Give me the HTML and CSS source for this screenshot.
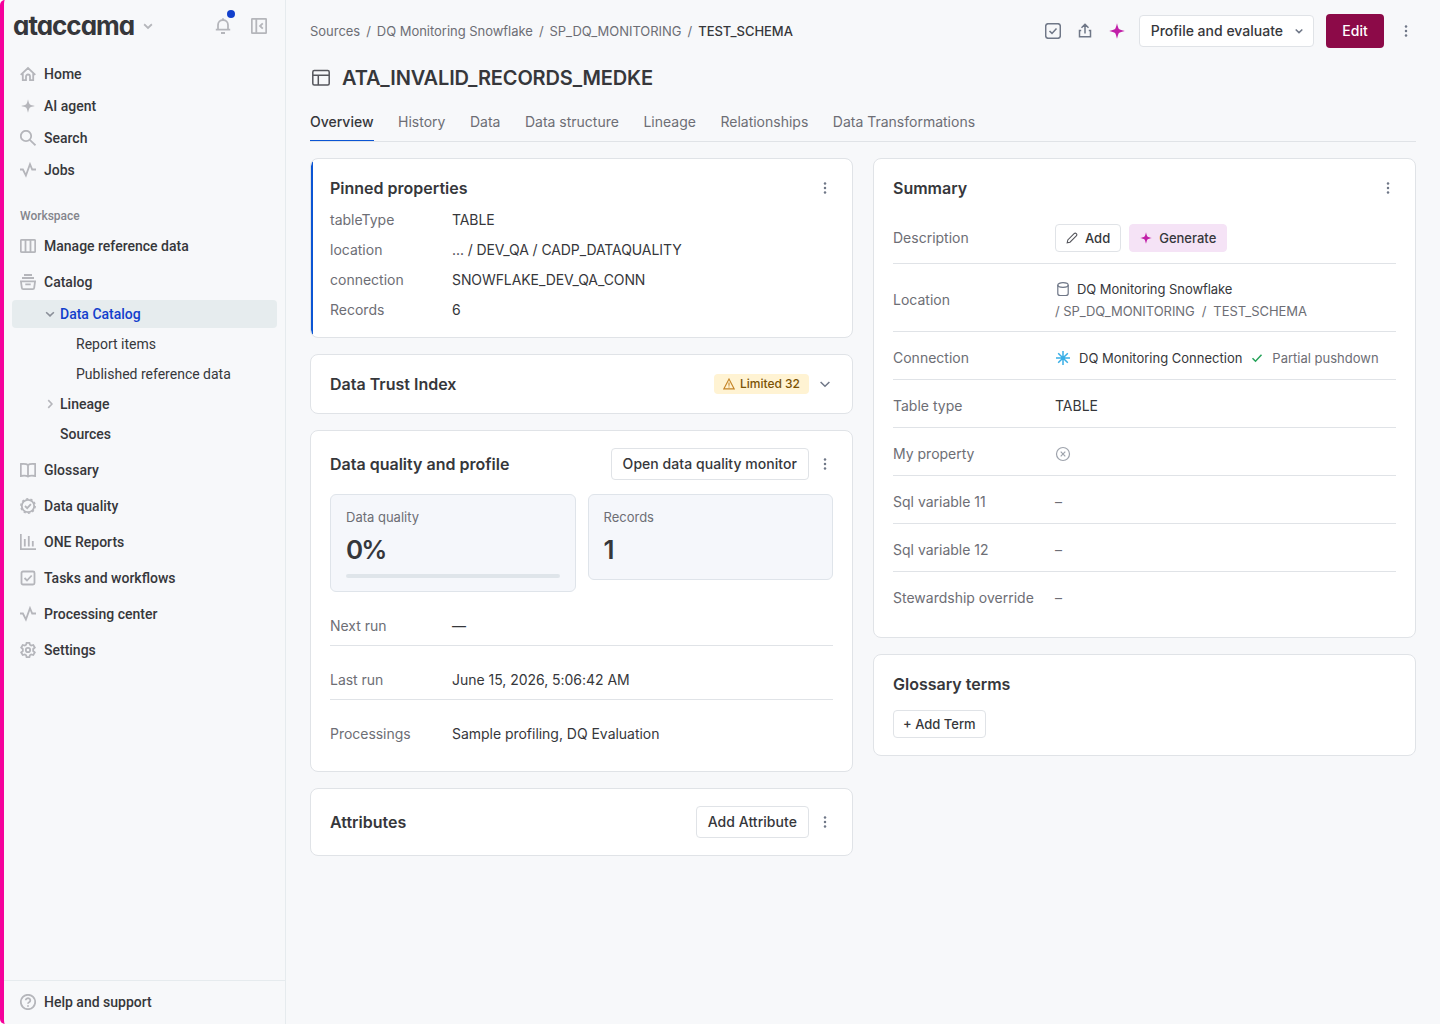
FILE: index.html
```html
<!DOCTYPE html>
<html lang="en">
<head>
    <meta charset="UTF-8">
    <meta name="viewport" content="width=device-width, initial-scale=1.0">
    <title>ATA_INVALID_RECORDS_MEDKE</title>
    <link rel="stylesheet" href="styles.css">
</head>
<body>
    <!-- shared icons -->
    <svg class="sprite">
        <symbol id="kebab" viewBox="0 0 16 16"><g fill="currentColor"><circle cx="8" cy="3.4" r="1.25"/><circle cx="8" cy="8" r="1.25"/><circle cx="8" cy="12.6" r="1.25"/></g></symbol>
        <symbol id="chevron" viewBox="0 0 16 16"><path d="M3.6 6l4.4 4.2L12.4 6"/></symbol>
        <symbol id="star" viewBox="0 0 16 16"><path fill="currentColor" stroke="none" d="M8 .2C8.600 2.700 9.300 5.400 10 6c.7.7 3.400 1.400 5.800 2-2.400.6-5.100 1.300-5.800 2-.7.6-1.400 3.300-2 5.800-.6-2.500-1.300-5.200-2-5.800-.7-.7-3.400-1.400-5.800-2 2.400-.6 5.100-1.300 5.800-2 .7-.6 1.400-3.300 2-5.800z"/></symbol>
        <symbol id="pulse" viewBox="0 0 16 16"><path d="M0 7.500h2.900l3 6L10 2.200l2.200 5.300H16"/></symbol>
        <symbol id="check-box" viewBox="0 0 16 16"><rect x="1.500" y="1.500" width="13" height="13" rx="1.500"/><path d="M4.500 8l2.500 2.500 4.700-5"/></symbol>
    </svg>

    <div class="app">
        <aside class="sidebar">
            <div class="brand">
                <span class="logo">ataccama</span>
                <svg class="icon brand-arrow"><use href="#chevron"/></svg>
                <span class="bell">
                    <svg class="icon" viewBox="0 0 16 16"><path d="M3 11.700V7a5 5 0 0 1 10 0v4.700M.8 11.700h14.400M8 2V.2M6 15h4"/></svg>
                    <i class="dot"></i>
                </span>
                <svg class="icon collapse" viewBox="0 0 16 16"><rect x=".8" y=".8" width="14.400" height="14.400" rx="1"/><path d="M5.300 1v14M11.800 5.300L9 8l2.800 2.700"/></svg>
            </div>

            <nav class="nav-top">
                <a class="nav-item"><svg class="icon" viewBox="0 0 16 16"><path d="M.7 8.800L8 2l7.300 6.800M2.800 7.500v6.700H6V10.500a2 2 0 0 1 4 0v3.700h3.200V7.500"/></svg>Home</a>
                <a class="nav-item"><svg class="icon star-small"><use href="#star"/></svg>AI agent</a>
                <a class="nav-item"><svg class="icon" viewBox="0 0 16 16"><circle cx="6" cy="6" r="5.200"/><path d="M9.800 9.800l5.700 5.500"/></svg>Search</a>
                <a class="nav-item"><svg class="icon"><use href="#pulse"/></svg>Jobs</a>
            </nav>

            <div class="nav-label">Workspace</div>
            <nav class="nav-main">
                <a class="nav-item"><svg class="icon" viewBox="0 0 16 16"><rect x=".8" y="1.800" width="14.400" height="12.400" rx=".8"/><path d="M5.500 2v12M10.500 2v12"/></svg>Manage reference data</a>
                <div class="nav-group">
                    <a class="nav-item"><svg class="icon" viewBox="0 0 16 16"><path d="M4 1h8M2 4h12M.9 7.300h14.200l-.9 6.400a1.500 1.500 0 0 1-1.500 1.400H3.300a1.500 1.500 0 0 1-1.500-1.400zM5.300 10.400h5.400"/></svg>Catalog</a>
                    <div class="sub-nav">
                        <a class="sub-item active"><svg class="icon"><use href="#chevron"/></svg>Data Catalog</a>
                        <a class="sub-item leaf">Report items</a>
                        <a class="sub-item leaf">Published reference data</a>
                        <a class="sub-item closed"><svg class="icon"><use href="#chevron"/></svg>Lineage</a>
                        <a class="sub-item plain">Sources</a>
                    </div>
                </div>
                <a class="nav-item"><svg class="icon" viewBox="0 0 16 16"><path d="M8 3v10.500M8 3C6.500 1.700 3.500 1.700.8 2v12c2.700-.4 5.700-.4 7.200.6 1.500-1 4.500-1 7.200-.6V2C12.500 1.700 9.500 1.700 8 3z"/></svg>Glossary</a>
                <a class="nav-item"><svg class="icon" viewBox="0 0 16 16"><circle cx="8" cy="8" r="6.200"/><circle cx="8" cy="8" r="7.200" stroke-width="1.400" stroke-dasharray="2.300 2.224"/><path d="M5 8l2.200 2.200 3.700-4"/></svg>Data quality</a>
                <a class="nav-item"><svg class="icon" viewBox="0 0 16 16"><path d="M.8 0v15.200H16M4.800 5v7.500M8.800 2v10.500M12.800 7v5.500"/></svg>ONE Reports</a>
                <a class="nav-item"><svg class="icon"><use href="#check-box"/></svg>Tasks and workflows</a>
                <a class="nav-item"><svg class="icon"><use href="#pulse"/></svg>Processing center</a>
                <a class="nav-item"><svg class="icon" viewBox="0 0 16 16"><path d="M6.600 .8h2.800l.5 2 1.300.8 2.100-.6 1.500 2.500-1.600 1.500v2l1.600 1.500-1.500 2.500-2.100-.6-1.300.8-.5 2H6.600l-.5-2-1.300-.8-2.100.6-1.500-2.500L2.800 9V7L1.200 5.500 2.700 3l2.100.6 1.300-.8z"/><circle cx="8" cy="8" r="2.200"/></svg>Settings</a>
            </nav>

            <div class="help">
                <a class="nav-item"><svg class="icon" viewBox="0 0 16 16"><circle cx="8" cy="8" r="7.200"/><path d="M5.700 6.300a2.300 2.100 0 1 1 3.400 1.900c-.8.4-1.100.7-1.100 1.500M8 11.200v1.600"/></svg>Help and support</a>
            </div>
        </aside>

        <main class="main">
            <header class="topbar">
                <div class="breadcrumbs">
                    <a>Sources</a><i>/</i><a>DQ Monitoring Snowflake</a><i>/</i><a>SP_DQ_MONITORING</a><i>/</i><b>TEST_SCHEMA</b>
                </div>
                <div class="actions">
                    <svg class="icon" viewBox="0 0 16 16"><rect x=".7" y=".7" width="14.600" height="14.600" rx="2.500"/><path d="M4.500 8l2.500 2.400 4.500-5"/></svg>
                    <svg class="icon" viewBox="0 0 16 16"><path d="M8 10.500V1.500M4.500 4.700L8 1.200l3.500 3.500M4.200 7.500H2.500v6.300h11V7.500h-1.700"/></svg>
                    <svg class="icon magenta"><use href="#star"/></svg>
                    <button class="btn profile">Profile and evaluate<svg class="icon"><use href="#chevron"/></svg></button>
                    <button class="btn primary">Edit</button>
                    <svg class="icon more"><use href="#kebab"/></svg>
                </div>
            </header>

            <div class="title">
                <svg class="icon" viewBox="0 0 18 18"><rect x=".8" y="1.500" width="16.400" height="14.600" rx="1.500"/><path d="M1 6.300h16M6.300 6.300V16"/></svg>
                <h1>ATA_INVALID_RECORDS_MEDKE</h1>
            </div>

            <nav class="tabs">
                <a class="active">Overview</a>
                <a>History</a>
                <a>Data</a>
                <a>Data structure</a>
                <a>Lineage</a>
                <a>Relationships</a>
                <a>Data Transformations</a>
            </nav>

            <div class="columns">
                <div class="column">
                    <section class="card pinned">
                        <div class="card-header"><h2>Pinned properties</h2><svg class="icon"><use href="#kebab"/></svg></div>
                        <dl class="props">
                            <dt>tableType</dt><dd>TABLE</dd>
                            <dt>location</dt><dd>... / DEV_QA / CADP_DATAQUALITY</dd>
                            <dt>connection</dt><dd>SNOWFLAKE_DEV_QA_CONN</dd>
                            <dt>Records</dt><dd>6</dd>
                        </dl>
                    </section>

                    <section class="card">
                        <div class="card-header">
                            <h2>Data Trust Index</h2>
                            <span class="badge"><svg class="icon" viewBox="0 0 12 12"><path d="M6 1L.8 10.900h10.400zM6 4.500v3.300M6 8.500v1.100"/></svg>Limited 32</span>
                            <svg class="icon"><use href="#chevron"/></svg>
                        </div>
                    </section>

                    <section class="card">
                        <div class="card-header">
                            <h2>Data quality and profile</h2>
                            <button class="btn">Open data quality monitor</button>
                            <svg class="icon"><use href="#kebab"/></svg>
                        </div>
                        <div class="tiles">
                            <div class="tile">
                                <span>Data quality</span>
                                <strong>0%</strong>
                                <div class="progress"></div>
                            </div>
                            <div class="tile">
                                <span>Records</span>
                                <strong>1</strong>
                            </div>
                        </div>
                        <div class="run-row"><label>Next run</label><span>—</span></div>
                        <div class="run-row"><label>Last run</label><span>June 15, 2026, 5:06:42 AM</span></div>
                        <div class="run-row"><label>Processings</label><span>Sample profiling, DQ Evaluation</span></div>
                    </section>

                    <section class="card">
                        <div class="card-header">
                            <h2>Attributes</h2>
                            <button class="btn">Add Attribute</button>
                            <svg class="icon"><use href="#kebab"/></svg>
                        </div>
                    </section>
                </div>

                <div class="column">
                    <section class="card">
                        <div class="card-header"><h2>Summary</h2><svg class="icon"><use href="#kebab"/></svg></div>
                        <div class="sum-row description">
                            <label>Description</label>
                            <div class="value">
                                <button class="btn small add"><svg class="icon" viewBox="0 0 12 12"><path d="M1.200 10.800l.6-2.900 6.300-6.300a1.450 1.450 0 0 1 2.200 2.200L4 10.200z"/></svg>Add</button>
                                <button class="btn small generate"><svg class="icon magenta"><use href="#star"/></svg>Generate</button>
                            </div>
                        </div>
                        <div class="sum-row location">
                            <label>Location</label>
                            <div class="value">
                                <div class="source"><svg class="icon" viewBox="0 0 16 16"><ellipse cx="8" cy="4" rx="5.200" ry="2.300"/><path d="M2.800 4v8.500c0 1.200 1 2 2.500 2h5.400c1.500 0 2.500-.8 2.500-2V4"/></svg>DQ Monitoring Snowflake</div>
                                <div class="path">/ SP_DQ_MONITORING<i>/</i>TEST_SCHEMA</div>
                            </div>
                        </div>
                        <div class="sum-row connection">
                            <label>Connection</label>
                            <div class="value">
                                <svg class="icon flake" viewBox="0 0 16 16"><path d="M8 1v14M1 8h14M3.200 3.200l9.600 9.600M12.800 3.200l-9.600 9.600"/></svg>
                                <span>DQ Monitoring Connection</span>
                                <svg class="icon tick" viewBox="0 0 12 12"><path d="M1.500 6.200l3 3 6-6.400"/></svg>
                                <em>Partial pushdown</em>
                            </div>
                        </div>
                        <div class="sum-row"><label>Table type</label><div class="value">TABLE</div></div>
                        <div class="sum-row"><label>My property</label><div class="value"><svg class="icon cross" viewBox="0 0 16 16"><circle cx="8" cy="8" r="6.500"/><path d="M5.700 5.700l4.600 4.600M10.300 5.700l-4.600 4.600"/></svg></div></div>
                        <div class="sum-row"><label>Sql variable 11</label><div class="value empty">–</div></div>
                        <div class="sum-row"><label>Sql variable 12</label><div class="value empty">–</div></div>
                        <div class="sum-row"><label>Stewardship override</label><div class="value empty">–</div></div>
                    </section>

                    <section class="card">
                        <div class="card-header"><h2>Glossary terms</h2></div>
                        <button class="btn small term">+ Add Term</button>
                    </section>
                </div>
            </div>
        </main>
    </div>
</body>
</html>
```
FILE: styles.css
```css
* {
    box-sizing: border-box;
}
body {
    margin: 0;
    background: #fff;
    font-family: Inter, 'Liberation Sans', sans-serif;
    font-size: 14px;
    line-height: 20px;
    color: #36373b;
}
h1, h2, dl, dd {
    margin: 0;
}
i, em {
    font-style: normal;
}
.sprite {
    display: none;
}
.icon {
    width: 16px;
    height: 16px;
    flex: none;
    fill: none;
    stroke: currentColor;
    stroke-width: 1.5;
    color: #6f7787;
}
use[href="#kebab"] {
    stroke: none;
}
.app {
    display: flex;
    height: 1024px;
    border-left: 4px solid #f5009b;
    border-radius: 5px 0 0 5px;
    background: #f7f8fa;
    overflow: hidden;
}

/* sidebar */
.sidebar {
    width: 282px;
    display: flex;
    flex-direction: column;
    border-right: 1px solid #e6ebee;
    font-family: Roboto, sans-serif;
    font-weight: 500;
}
.sidebar .icon {
    color: #b5b6bb;
    stroke-width: 1.8;
}
.brand {
    display: flex;
    align-items: center;
    height: 52px;
    padding: 0 18px 0 9px;
}
.logo {
    width: 122px;
    font-family: Inter, sans-serif;
    font-size: 26px;
    font-weight: 700;
    letter-spacing: -1px;
    line-height: 36px;
    font-feature-settings: "cv11";
    color: #36373b;
}
.sidebar .brand-arrow {
    width: 14px;
    height: 14px;
    margin-left: 6px;
    stroke-width: 2;
}
.bell {
    position: relative;
    height: 16px;
    margin-left: auto;
}
.bell .icon {
    display: block;
}
.dot {
    position: absolute;
    top: -8px;
    right: -4px;
    width: 8px;
    height: 8px;
    border-radius: 50%;
    background: #1240cc;
}
.collapse {
    margin-left: 20px;
}
.nav-top {
    display: flex;
    flex-direction: column;
    gap: 4px;
    padding-top: 8px;
}
.nav-item {
    display: flex;
    align-items: center;
    gap: 8px;
    height: 28px;
    padding-left: 16px;
}
.sidebar .star-small {
    width: 14px;
    height: 14px;
    margin: 0 1px;
}
.nav-label {
    margin: 24px 0 8px 16px;
    font-size: 12px;
    line-height: 16px;
    color: #84858c;
}
.nav-main {
    display: flex;
    flex-direction: column;
    gap: 8px;
}
.sub-nav {
    display: flex;
    flex-direction: column;
    gap: 2px;
    padding: 4px 8px 0;
}
.sub-item {
    display: flex;
    align-items: center;
    height: 28px;
    padding-left: 31px;
    border-radius: 4px;
}
.sub-item .icon {
    width: 14px;
    height: 14px;
    margin-right: 3px;
}
.sub-item.active {
    background: #e6ecee;
    color: #1240cc;
}
.sub-item.active .icon {
    color: #8a8f98;
}
.sub-item.closed .icon {
    transform: rotate(-90deg);
}
.sub-item.leaf {
    padding-left: 64px;
    font-weight: 400;
}
.sub-item.plain {
    padding-left: 48px;
}
.help {
    margin-top: auto;
    height: 44px;
    padding-top: 7px;
    border-top: 1px solid #e6ebee;
}

/* page header */
.main {
    flex: 1;
    padding: 0 24px;
}
.topbar {
    display: flex;
    justify-content: space-between;
    align-items: center;
    height: 62px;
}
.breadcrumbs {
    font-size: 13px;
    letter-spacing: -0.03px;
    color: #6d6e75;
}
.breadcrumbs i {
    margin: 0 6px;
}
.breadcrumbs b {
    font-weight: 500;
    color: #36373b;
}
.actions {
    display: flex;
    align-items: center;
    gap: 16px;
}
.magenta {
    color: #c11fa8;
}
.btn {
    height: 32px;
    padding: 0 11px;
    background: #fff;
    border: 1px solid #e0e3e7;
    border-radius: 4px;
    font: 500 14px/20px Inter, 'Liberation Sans', sans-serif;
    color: #36373b;
    white-space: nowrap;
}
.card-header .btn {
    letter-spacing: 0.05px;
}
.btn.profile {
    display: flex;
    align-items: center;
    margin-left: -2px;
    padding-right: 8px;
}
.btn.profile .icon {
    width: 12px;
    height: 12px;
    margin-left: 10px;
    stroke-width: 2;
}
.btn.primary {
    width: 58px;
    height: 34px;
    margin-left: -4px;
    background: #8c0a48;
    border: none;
    color: #fff;
}
.more {
    margin-left: -2px;
    margin-right: 2px;
}
.title {
    display: flex;
    align-items: center;
    height: 32px;
    padding-left: 2px;
}
.title .icon {
    width: 18px;
    height: 18px;
    margin-right: 12px;
    color: #55565c;
}
.title h1 {
    font-size: 20px;
    font-weight: 600;
    letter-spacing: -0.15px;
    line-height: 28px;
}
.tabs {
    display: flex;
    gap: 24.5px;
    height: 48px;
    border-bottom: 1px solid #e0e3e7;
    color: #6d6e75;
}
.tabs a {
    height: 47px;
    padding-top: 18px;
}
.tabs .active {
    border-bottom: 1px solid #0b55d4;
    font-weight: 500;
    color: #36373b;
}

/* cards */
.columns {
    display: grid;
    grid-template-columns: 1fr 1fr;
    gap: 20px;
    margin-top: 16px;
}
.column {
    display: flex;
    flex-direction: column;
    gap: 16px;
}
.card {
    padding: 17px 19px;
    background: #fff;
    border: 1px solid #e0e3e7;
    border-radius: 8px;
}
.card-header {
    display: flex;
    align-items: center;
    min-height: 24px;
}
.card-header h2 {
    flex: 1;
    font-size: 16px;
    font-weight: 600;
    line-height: 24px;
}
.card-header > .icon {
    margin-left: 8px;
}
.pinned {
    padding-bottom: 12px;
    background: linear-gradient(#0b55d4, #0b55d4) 0 0 / 2px 100% no-repeat padding-box #fff;
}
.props {
    display: grid;
    grid-template-columns: 122px 1fr;
    margin-top: 5px;
    line-height: 30px;
}
.props dd {
    letter-spacing: -0.09px;
}
.props dt, label, em, .path {
    color: #6d6e75;
}
.badge {
    display: flex;
    align-items: center;
    height: 20px;
    padding: 0 9px;
    border-radius: 4px;
    background: #fff3d3;
    font-size: 12px;
    font-weight: 500;
    color: #7a5205;
}
.badge .icon {
    width: 12px;
    height: 12px;
    margin-right: 5px;
    color: #c58427;
    stroke-width: 1.1;
}
.tiles {
    display: grid;
    grid-template-columns: 1fr 1fr;
    align-items: start;
    gap: 12px;
    margin-top: 14px;
}
.tile {
    padding: 12px 15px 13px;
    background: #f5f7fb;
    border: 1px solid #dfe4ea;
    border-radius: 6px;
    font-size: 13px;
    color: #6d6e75;
}
.tile span, .tile strong {
    display: block;
}
.tile strong {
    margin-top: 7px;
    font-size: 26px;
    font-weight: 600;
    letter-spacing: -2px;
    line-height: 32px;
    color: #36373b;
}
.progress {
    height: 4px;
    margin-top: 8px;
    border-radius: 2px;
    background: #dfe5ea;
}
.run-row {
    display: flex;
    height: 54px;
    padding-top: 24px;
    border-bottom: 1px solid #e0e3e7;
    letter-spacing: -0.03px;
}
.run-row:last-child, .sum-row:last-child {
    border-bottom: none;
}
.run-row label {
    width: 122px;
}
.sum-row {
    display: flex;
    align-items: center;
    height: 48px;
    padding: 16px 0 11px;
    border-bottom: 1px solid #e0e3e7;
}
.sum-row label {
    width: 162px;
}
.sum-row:last-child {
    padding-bottom: 12px;
}
.value {
    display: flex;
    align-items: center;
}
.value.empty {
    color: #6d6e75;
}
.description {
    height: 64px;
    padding-top: 24px;
}
.btn.small {
    display: flex;
    align-items: center;
    height: 28px;
    padding: 0 10px;
    font-size: 13px;
}
.btn .icon {
    width: 12px;
    height: 12px;
}
.add {
    margin-right: 8px;
}
.add .icon {
    margin-right: 7px;
    color: #55565c;
    stroke-width: 1.1;
}
.btn.generate {
    background: #f5e3f6;
    border-color: #f5e3f6;
}
.generate .icon {
    margin-right: 7px;
}
.location {
    height: 68px;
    padding: 14px 0 9px;
}
.location .value {
    display: block;
    font-size: 13px;
    letter-spacing: -0.06px;
    line-height: 22px;
}
.source {
    display: flex;
    align-items: center;
}
.source .icon {
    margin-right: 6px;
    stroke-width: 1.2;
}
.path i {
    margin: 0 7px;
}
.connection .value {
    font-size: 13px;
}
.connection .flake {
    margin-right: 8px;
    color: #38aee6;
}
.connection .tick {
    width: 12px;
    height: 12px;
    margin: 0 9px;
    color: #26a35a;
}
.cross {
    color: #9ea3ac;
    stroke-width: 1.2;
}
.btn.term {
    margin-top: 14px;
    padding: 0 9px;
}
```
